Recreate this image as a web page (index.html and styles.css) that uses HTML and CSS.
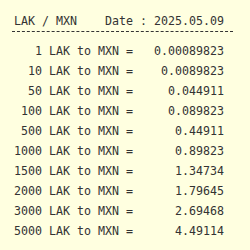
FILE: index.html
```html
<!DOCTYPE html>
<html>
<head>
<meta charset="utf-8">
<link rel="stylesheet" href="styles.css">
</head>
<body>
<div class="wrap">
  <div class="head">LAK / MXN    Date : 2025.05.09</div>
  <div class="rows">
    <div class="row">   1 LAK to MXN =   0.00089823</div>
    <div class="row">  10 LAK to MXN =    0.0089823</div>
    <div class="row">  50 LAK to MXN =     0.044911</div>
    <div class="row"> 100 LAK to MXN =     0.089823</div>
    <div class="row"> 500 LAK to MXN =      0.44911</div>
    <div class="row">1000 LAK to MXN =      0.89823</div>
    <div class="row">1500 LAK to MXN =      1.34734</div>
    <div class="row">2000 LAK to MXN =      1.79645</div>
    <div class="row">3000 LAK to MXN =      2.69468</div>
    <div class="row">5000 LAK to MXN =      4.49114</div>
  </div>
</div>
</body>
</html>
```
FILE: styles.css
```css
html, body {
  margin: 0;
  padding: 0;
  background: #ffffe0;
}
.wrap {
  padding: 11px 0 0 12px;
  font-family: "DejaVu Sans Mono", monospace;
  font-size: 11.63px;
  color: #333;
}
.head {
  width: 219px;
  padding-left: 2px;
  line-height: 20px;
  white-space: pre;
  border-bottom: 1px dashed #333;
}
.rows {
  margin-top: 9px;
  padding-left: 2px;
}
.row {
  line-height: 20px;
  white-space: pre;
}
```
